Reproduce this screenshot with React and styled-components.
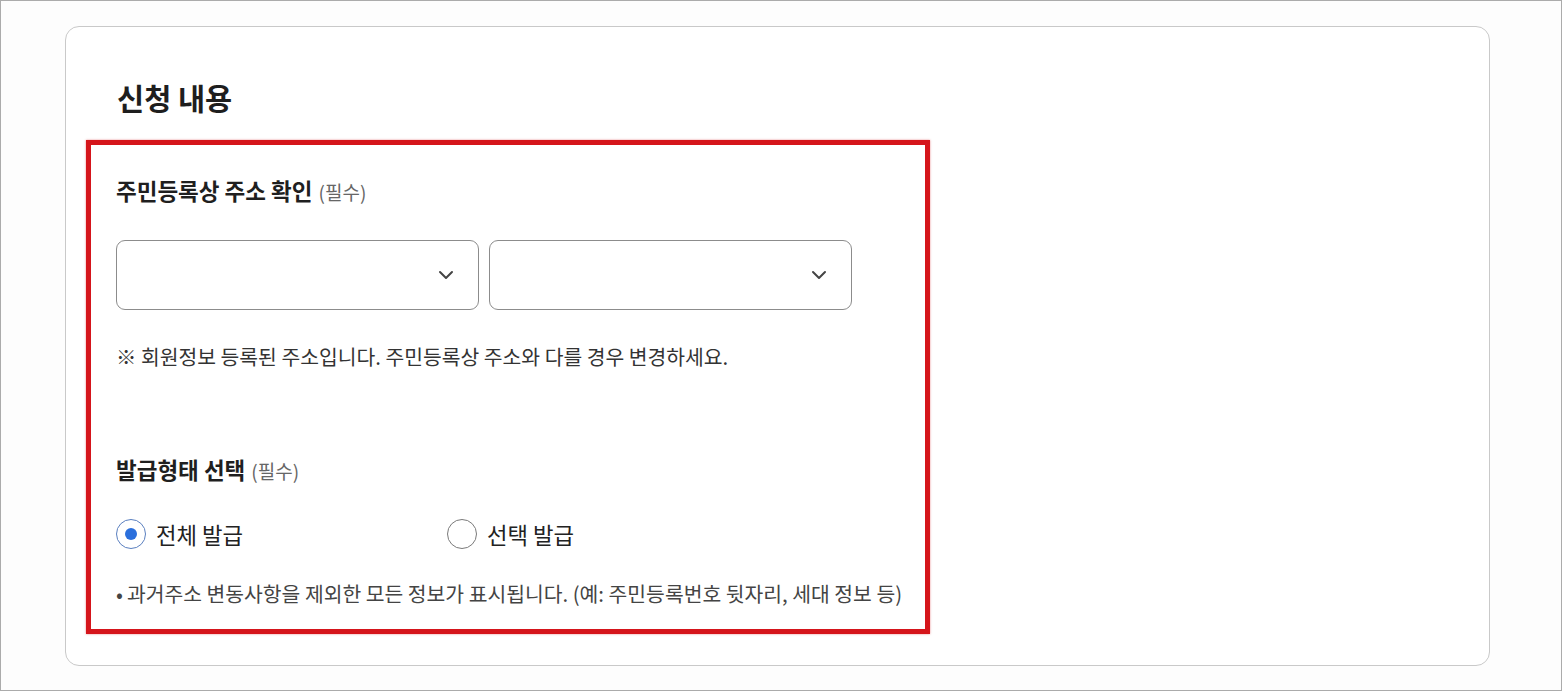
import React, { useState } from "react";
import styled, { createGlobalStyle } from "styled-components";

const GlobalStyle = createGlobalStyle`
  * { box-sizing: border-box; }
  body {
    margin: 0;
    background: #fff;
    font-family: "Noto Sans CJK KR", "Noto Sans", sans-serif;
    color: #222;
  }
`;

const Frame = styled.div`
  width: 1562px;
  height: 691px;
  border: 1px solid #ababab;
  background: #fdfdfd;
  padding: 25px 0 0 64px;
`;

const Card = styled.section`
  width: 1425px;
  height: 640px;
  border: 1px solid #c9c9c9;
  border-radius: 14px;
  background: #fff;
  padding: 0 0 0 20px;
`;

const Title = styled.h2`
  margin: 0 0 0 31px;
  height: 113px;
  display: flex;
  align-items: center;
  padding-top: 27px;
  font-size: 29.5px;
  font-weight: 700;
  color: #1e1e1e;
`;

const Highlight = styled.div`
  width: 844px;
  height: 494px;
  border: 5px solid #d5151b;
  box-shadow: 0 0 2px rgba(213, 21, 27, 0.5);
  padding: 31px 0 0 25px;
`;

const Label = styled.h3`
  margin: ${(p) => p.$top || 0}px 0 0;
  font-size: 22.5px;
  line-height: 28px;
  font-weight: 700;
  color: #1f1f1f;
  small {
    font-size: 19px;
    font-weight: 400;
    color: #666;
    margin-left: 6px;
  }
`;

const SelectRow = styled.div`
  display: flex;
  gap: 10px;
  margin-top: 34px;
`;

const SelectBox = styled.button`
  width: 363px;
  height: 70px;
  border: 1px solid #8c8c8c;
  border-radius: 9px;
  background: #fff;
  display: flex;
  align-items: center;
  justify-content: flex-end;
  padding: 0 24px 0 16px;
  cursor: pointer;
`;

const Note = styled.p`
  margin: 32px 0 0;
  font-size: 20.4px;
  line-height: 28px;
  color: #333;
`;

const RadioRow = styled.div`
  display: grid;
  grid-template-columns: 331px auto;
  margin-top: 34px;
`;

const RadioItem = styled.label`
  display: flex;
  align-items: center;
  gap: 10px;
  height: 30px;
  font-size: 22.3px;
  color: #222;
  cursor: pointer;
`;

const RadioMark = styled.span`
  width: 30px;
  height: 30px;
  border-radius: 50%;
  border: 1px solid ${(p) => (p.$checked ? "#5a7fbf" : "#7a7a7a")};
  display: flex;
  align-items: center;
  justify-content: center;
  background: #fff;
  &::after {
    content: "";
    width: 12px;
    height: 12px;
    border-radius: 50%;
    background: ${(p) => (p.$checked ? "#2b6fdc" : "transparent")};
  }
`;

const Bullet = styled.p`
  margin: 31px 0 0;
  font-size: 20.4px;
  line-height: 26px;
  color: #444;
  &::before {
    content: "•";
    margin-right: 4px;
  }
`;

const Chevron = () => (
  <svg width="16" height="10" viewBox="0 0 16 10" fill="none">
    <path d="M2 2l6 6 6-6" stroke="#444" strokeWidth="2" strokeLinecap="round" strokeLinejoin="round" />
  </svg>
);

const App = () => {
  const [type, setType] = useState("all");
  const options = [
    { id: "all", label: "전체 발급" },
    { id: "select", label: "선택 발급" },
  ];

  return (
    <Frame>
      <GlobalStyle />
      <Card>
        <Title>신청 내용</Title>
        <Highlight>
          <Label>
            주민등록상 주소 확인<small>(필수)</small>
          </Label>
          <SelectRow>
            <SelectBox type="button" aria-label="시/도">
              <Chevron />
            </SelectBox>
            <SelectBox type="button" aria-label="시/군/구">
              <Chevron />
            </SelectBox>
          </SelectRow>
          <Note>※ 회원정보 등록된 주소입니다. 주민등록상 주소와 다를 경우 변경하세요.</Note>

          <Label $top={85}>
            발급형태 선택<small>(필수)</small>
          </Label>
          <RadioRow>
            {options.map((o) => (
              <RadioItem key={o.id} onClick={() => setType(o.id)}>
                <RadioMark $checked={type === o.id} />
                {o.label}
              </RadioItem>
            ))}
          </RadioRow>
          <Bullet>과거주소 변동사항을 제외한 모든 정보가 표시됩니다. (예: 주민등록번호 뒷자리, 세대 정보 등)</Bullet>
        </Highlight>
      </Card>
    </Frame>
  );
};

export default App;
